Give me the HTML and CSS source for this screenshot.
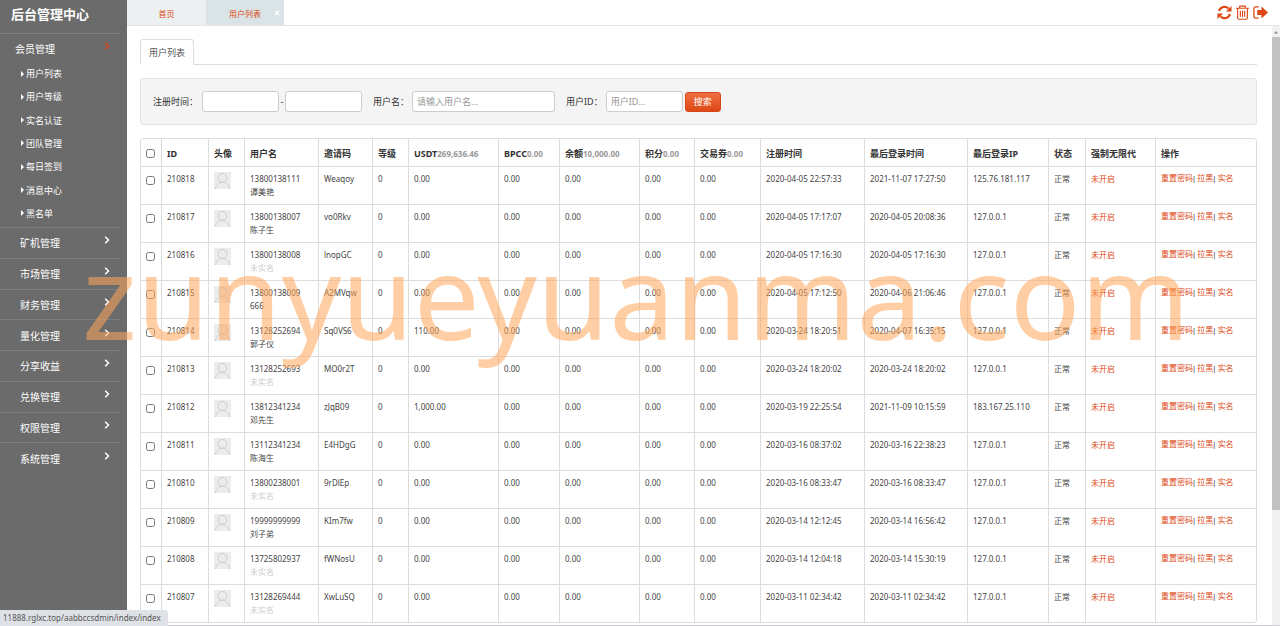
FILE: index.html
```html
<!DOCTYPE html>
<html lang="zh-CN">
<head>
<meta charset="utf-8">
<title>后台管理中心</title>
<link rel="stylesheet" href="styles.css">
</head>
<body>
<svg class="defs" width="0" height="0" aria-hidden="true">
<symbol id="avatar" viewBox="0 0 17 17"><rect width="17" height="17" fill="#ececec"/><circle cx="8.5" cy="5.8" r="4.4" fill="none" stroke="#cfcfcf"/><path d="M1.500 17c.4-4 3-6.600 7-6.600s6.600 2.600 7 6.600" fill="none" stroke="#cfcfcf"/></symbol>
<symbol id="chevron" viewBox="0 0 6 8"><path d="M1.200 .8 4.500 4 1.200 7.200" fill="none" stroke="currentColor" stroke-width="1.500"/></symbol>
</svg>
<div class="app">
<aside class="sidebar">
<h1 class="brand">后台管理中心</h1>
<nav>
<a class="group open" href="#"><span>会员管理</span><svg class="chevron"><use href="#chevron"/></svg></a>
<ul class="submenu">
<li><a href="#">用户列表</a></li>
<li><a href="#">用户等级</a></li>
<li><a href="#">实名认证</a></li>
<li><a href="#">团队管理</a></li>
<li><a href="#">每日签到</a></li>
<li><a href="#">消息中心</a></li>
<li><a href="#">黑名单</a></li>
</ul>
<div class="groups">
<a class="group" href="#"><span>矿机管理</span><svg class="chevron"><use href="#chevron"/></svg></a>
<a class="group" href="#"><span>市场管理</span><svg class="chevron"><use href="#chevron"/></svg></a>
<a class="group" href="#"><span>财务管理</span><svg class="chevron"><use href="#chevron"/></svg></a>
<a class="group" href="#"><span>量化管理</span><svg class="chevron"><use href="#chevron"/></svg></a>
<a class="group" href="#"><span>分享收益</span><svg class="chevron"><use href="#chevron"/></svg></a>
<a class="group" href="#"><span>兑换管理</span><svg class="chevron"><use href="#chevron"/></svg></a>
<a class="group" href="#"><span>权限管理</span><svg class="chevron"><use href="#chevron"/></svg></a>
<a class="group" href="#"><span>系统管理</span><svg class="chevron"><use href="#chevron"/></svg></a>
</div>
</nav>
</aside>
<div class="main">
<header class="topbar">
<a class="page-tab" href="#">首页</a>
<a class="page-tab active" href="#">用户列表<svg class="close" viewBox="0 0 6 6"><path d="M1 1l4 4M5 1 1 5" stroke="#fff" stroke-width="1.600"/></svg></a>
<div class="tools">
<button type="button" aria-label="刷新"><svg viewBox="0 0 16 16"><path d="M2.200 6.500A6 6 0 0 1 12.300 3.800M13.800 9.500A6 6 0 0 1 3.700 12.200" fill="none" stroke="currentColor" stroke-width="2.300"/><path d="M15.500 1v6h-6zM.5 15V9h6z" fill="currentColor"/></svg></button>
<button type="button" aria-label="清理"><svg viewBox="0 0 16 16"><path d="M1 3.500h14M5 3.500V1.200h6v2.300M2.800 3.500v10.200q0 1.500 1.500 1.500h7.400q1.500 0 1.500-1.500V3.500M5.700 6v6.500M8 6v6.500M10.300 6v6.500" fill="none" stroke="currentColor" stroke-width="1.200"/></svg></button>
<button type="button" aria-label="退出"><svg viewBox="0 0 16 16"><path d="M6 2H3Q1 2 1 4v8q0 2 2 2h3" fill="none" stroke="currentColor" stroke-width="1.400"/><path d="M4.500 5.300H9V1.500L16 8l-7 6.500v-3.800H4.500z" fill="currentColor"/></svg></button>
</div>
</header>
<div class="frame">
<main class="content">
<div class="tabs"><a class="tab" href="#">用户列表</a></div>
<form class="filters">
<label for="from">注册时间：</label><input id="from" type="text"><span class="dash">-</span><input type="text" aria-label="结束时间">
<label class="next" for="name">用户名：</label><input id="name" class="wide" type="text" placeholder="请输入用户名...">
<label class="next" for="uid">用户ID：</label><input id="uid" type="text" placeholder="用户ID...">
<button type="button">搜索</button>
</form>
<table class="users">
<colgroup><col class="c-check"><col class="c-id"><col class="c-avatar"><col class="c-name"><col class="c-code"><col class="c-level"><col class="c-usdt"><col class="c-bpcc"><col class="c-balance"><col class="c-points"><col class="c-coupon"><col class="c-time"><col class="c-login"><col class="c-ip"><col class="c-state"><col class="c-force"><col></colgroup>
<thead><tr><th><input type="checkbox" aria-label="全选"></th><th>ID</th><th>头像</th><th>用户名</th><th>邀请码</th><th>等级</th><th>USDT<small>269,636.46</small></th><th>BPCC<small>0.00</small></th><th>余额<small>10,000.00</small></th><th>积分<small>0.00</small></th><th>交易券<small>0.00</small></th><th>注册时间</th><th>最后登录时间</th><th>最后登录IP</th><th>状态</th><th>强制无限代</th><th>操作</th></tr></thead>
<tbody>
<tr><td><input type="checkbox" aria-label="210818"></td><td>210818</td><td><svg class="avatar"><use href="#avatar"/></svg></td><td>13800138111<br>谭美艳</td><td>Weaqoy</td><td>0</td><td>0.00</td><td>0.00</td><td>0.00</td><td>0.00</td><td>0.00</td><td>2020-04-05 22:57:33</td><td>2021-11-07 17:27:50</td><td>125.76.181.117</td><td>正常</td><td><a href="#">未开启</a></td><td><a href="#">重置密码</a>| <a href="#">拉黑</a>| <a href="#">实名</a></td></tr>
<tr><td><input type="checkbox" aria-label="210817"></td><td>210817</td><td><svg class="avatar"><use href="#avatar"/></svg></td><td>13800138007<br>陈子生</td><td>vo0Rkv</td><td>0</td><td>0.00</td><td>0.00</td><td>0.00</td><td>0.00</td><td>0.00</td><td>2020-04-05 17:17:07</td><td>2020-04-05 20:08:36</td><td>127.0.0.1</td><td>正常</td><td><a href="#">未开启</a></td><td><a href="#">重置密码</a>| <a href="#">拉黑</a>| <a href="#">实名</a></td></tr>
<tr><td><input type="checkbox" aria-label="210816"></td><td>210816</td><td><svg class="avatar"><use href="#avatar"/></svg></td><td>13800138008<br><span class="muted">未实名</span></td><td>lnopGC</td><td>0</td><td>0.00</td><td>0.00</td><td>0.00</td><td>0.00</td><td>0.00</td><td>2020-04-05 17:16:30</td><td>2020-04-05 17:16:30</td><td>127.0.0.1</td><td>正常</td><td><a href="#">未开启</a></td><td><a href="#">重置密码</a>| <a href="#">拉黑</a>| <a href="#">实名</a></td></tr>
<tr><td><input type="checkbox" aria-label="210815"></td><td>210815</td><td><svg class="avatar"><use href="#avatar"/></svg></td><td>13800138009<br>666</td><td>A2MVqw</td><td>0</td><td>0.00</td><td>0.00</td><td>0.00</td><td>0.00</td><td>0.00</td><td>2020-04-05 17:12:50</td><td>2020-04-06 21:06:46</td><td>127.0.0.1</td><td>正常</td><td><a href="#">未开启</a></td><td><a href="#">重置密码</a>| <a href="#">拉黑</a>| <a href="#">实名</a></td></tr>
<tr><td><input type="checkbox" aria-label="210814"></td><td>210814</td><td><svg class="avatar"><use href="#avatar"/></svg></td><td>13128252694<br>郭子仪</td><td>Sq0VS6</td><td>0</td><td>110.00</td><td>0.00</td><td>0.00</td><td>0.00</td><td>0.00</td><td>2020-03-24 18:20:51</td><td>2020-04-07 16:35:15</td><td>127.0.0.1</td><td>正常</td><td><a href="#">未开启</a></td><td><a href="#">重置密码</a>| <a href="#">拉黑</a>| <a href="#">实名</a></td></tr>
<tr><td><input type="checkbox" aria-label="210813"></td><td>210813</td><td><svg class="avatar"><use href="#avatar"/></svg></td><td>13128252693<br><span class="muted">未实名</span></td><td>MO0r2T</td><td>0</td><td>0.00</td><td>0.00</td><td>0.00</td><td>0.00</td><td>0.00</td><td>2020-03-24 18:20:02</td><td>2020-03-24 18:20:02</td><td>127.0.0.1</td><td>正常</td><td><a href="#">未开启</a></td><td><a href="#">重置密码</a>| <a href="#">拉黑</a>| <a href="#">实名</a></td></tr>
<tr><td><input type="checkbox" aria-label="210812"></td><td>210812</td><td><svg class="avatar"><use href="#avatar"/></svg></td><td>13812341234<br>邓先生</td><td>zJqB09</td><td>0</td><td>1,000.00</td><td>0.00</td><td>0.00</td><td>0.00</td><td>0.00</td><td>2020-03-19 22:25:54</td><td>2021-11-09 10:15:59</td><td>183.167.25.110</td><td>正常</td><td><a href="#">未开启</a></td><td><a href="#">重置密码</a>| <a href="#">拉黑</a>| <a href="#">实名</a></td></tr>
<tr><td><input type="checkbox" aria-label="210811"></td><td>210811</td><td><svg class="avatar"><use href="#avatar"/></svg></td><td>13112341234<br>陈海生</td><td>E4HDgG</td><td>0</td><td>0.00</td><td>0.00</td><td>0.00</td><td>0.00</td><td>0.00</td><td>2020-03-16 08:37:02</td><td>2020-03-16 22:38:23</td><td>127.0.0.1</td><td>正常</td><td><a href="#">未开启</a></td><td><a href="#">重置密码</a>| <a href="#">拉黑</a>| <a href="#">实名</a></td></tr>
<tr><td><input type="checkbox" aria-label="210810"></td><td>210810</td><td><svg class="avatar"><use href="#avatar"/></svg></td><td>13800238001<br><span class="muted">未实名</span></td><td>9rDlEp</td><td>0</td><td>0.00</td><td>0.00</td><td>0.00</td><td>0.00</td><td>0.00</td><td>2020-03-16 08:33:47</td><td>2020-03-16 08:33:47</td><td>127.0.0.1</td><td>正常</td><td><a href="#">未开启</a></td><td><a href="#">重置密码</a>| <a href="#">拉黑</a>| <a href="#">实名</a></td></tr>
<tr><td><input type="checkbox" aria-label="210809"></td><td>210809</td><td><svg class="avatar"><use href="#avatar"/></svg></td><td>19999999999<br>刘子弟</td><td>KIm7fw</td><td>0</td><td>0.00</td><td>0.00</td><td>0.00</td><td>0.00</td><td>0.00</td><td>2020-03-14 12:12:45</td><td>2020-03-14 16:56:42</td><td>127.0.0.1</td><td>正常</td><td><a href="#">未开启</a></td><td><a href="#">重置密码</a>| <a href="#">拉黑</a>| <a href="#">实名</a></td></tr>
<tr><td><input type="checkbox" aria-label="210808"></td><td>210808</td><td><svg class="avatar"><use href="#avatar"/></svg></td><td>13725802937<br><span class="muted">未实名</span></td><td>fWNosU</td><td>0</td><td>0.00</td><td>0.00</td><td>0.00</td><td>0.00</td><td>0.00</td><td>2020-03-14 12:04:18</td><td>2020-03-14 15:30:19</td><td>127.0.0.1</td><td>正常</td><td><a href="#">未开启</a></td><td><a href="#">重置密码</a>| <a href="#">拉黑</a>| <a href="#">实名</a></td></tr>
<tr><td><input type="checkbox" aria-label="210807"></td><td>210807</td><td><svg class="avatar"><use href="#avatar"/></svg></td><td>13128269444<br><span class="muted">未实名</span></td><td>XwLuSQ</td><td>0</td><td>0.00</td><td>0.00</td><td>0.00</td><td>0.00</td><td>0.00</td><td>2020-03-11 02:34:42</td><td>2020-03-11 02:34:42</td><td>127.0.0.1</td><td>正常</td><td><a href="#">未开启</a></td><td><a href="#">重置密码</a>| <a href="#">拉黑</a>| <a href="#">实名</a></td></tr>
</tbody>
</table>
</main>
<div class="scrollbar"><svg viewBox="0 0 8 11"><path d="M2 7.500h4L4 5z" fill="#8a8a8a"/></svg><div class="thumb"></div></div>
</div>
</div>
</div>
<div class="watermark">zunyueyuanma.com</div>
<div class="status">11888.rglxc.top/aabbccsdmin/index/index</div>
</body>
</html>
```
FILE: styles.css
```css
* { box-sizing: border-box; }
body {
  margin: 0;
  height: 100vh;
  overflow: hidden;
  background: #fff;
  color: #444;
  font: 9px/13px "Noto Sans", "Noto Sans CJK SC", sans-serif;
}
a { color: #dd4814; text-decoration: none; }
.defs { position: absolute; }
.app { display: flex; height: 100vh; border-bottom: 1px solid #cdced4; }

.sidebar { flex: none; width: 127px; padding-right: 7px; background: #6b6b6b; color: #fff; }
.sidebar a { color: #fff; }
.brand {
  margin: 0;
  height: 34px;
  padding: 4px 11px;
  border-bottom: 1px solid #7d7d7d;
  font-size: 13px;
  line-height: 20px;
  white-space: nowrap;
}
.group {
  display: flex;
  align-items: center;
  justify-content: space-between;
  padding: 2px 10px 0 20px;
  font-size: 10px;
}
.group.open { height: 28px; padding-left: 15px; }
.groups { display: grid; grid-auto-rows: 1fr; height: 246px; }
.groups .group { border-top: 1px solid #7d7d7d; }
.chevron { width: 6px; height: 8px; margin-bottom: 7px; }
.open .chevron { color: #dd4814; }
.submenu {
  display: grid;
  grid-auto-rows: 1fr;
  height: 165px;
  margin: 0;
  padding: 0 0 2px 21px;
  list-style: none;
}
.submenu a { display: flex; align-items: center; gap: 2px; height: 100%; }
.submenu a::before {
  content: "";
  border: 3px solid transparent;
  border-left-color: #fff;
  border-right-width: 0;
}

.main { flex: 1; min-width: 0; display: flex; flex-direction: column; }
.topbar { flex: none; display: flex; height: 26px; border-bottom: 1px solid #e4e6e7; }
.page-tab {
  position: relative;
  display: flex;
  align-items: center;
  justify-content: center;
  width: 79px;
  padding-top: 2px;
  background: #ecf0f1;
  font-size: 8px;
}
.page-tab.active { width: 78px; background: #dae4e6; }
.close { position: absolute; right: 4px; top: 10px; width: 6px; height: 6px; }
.tools { display: flex; gap: 3px; align-items: center; margin-left: auto; padding-right: 12px; }
.tools button { width: 15px; height: 17px; padding: 0; border: 0; background: none; color: #dd4814; }
.tools svg { display: block; width: 15px; height: 15px; }

.frame { flex: 1; min-height: 0; display: flex; }
.content { flex: 1; min-width: 0; padding: 13px 15px 0 13px; overflow: hidden; }
.scrollbar { flex: none; width: 8px; background: #f1f1f1; }
.scrollbar svg { display: block; width: 8px; height: 11px; }
.thumb { height: 79%; background: #c1c1c1; }

.tabs { display: flex; border-bottom: 1px solid #ddd; }
.tab {
  margin-bottom: -1px;
  padding: 6px 8px 5px;
  border: 1px solid #ddd;
  border-bottom-color: #fff;
  border-radius: 3px 3px 0 0;
  background: #fff;
  color: #555;
}
.filters {
  display: flex;
  align-items: center;
  margin: 13px 0;
  padding: 12px;
  border: 1px solid #e3e3e3;
  border-radius: 3px;
  background: #f4f4f4;
  color: #333;
}
.filters input {
  width: 77px;
  height: 21px;
  padding: 0 4px;
  border: 1px solid #ccc;
  border-radius: 3px;
  background: #fff;
  font: inherit;
}
.filters input::placeholder { color: #999; }
.filters .wide { width: 143px; }
.filters label { padding-right: 4px; }
.filters .next { padding: 0 3px 0 11px; }
.dash { width: 6px; text-align: center; }
.filters button {
  width: 36px;
  height: 20px;
  margin-left: 2px;
  padding: 0;
  border: 1px solid #d5481a;
  border-radius: 3px;
  background: linear-gradient(#ee6f42, #dd4814);
  color: #fff;
  font: inherit;
}

.users {
  width: 100%;
  table-layout: fixed;
  border: 1px solid #ddd;
  border-radius: 3px;
  border-collapse: separate;
  border-spacing: 0;
}
.users th, .users td { text-align: left; vertical-align: top; white-space: nowrap; }
.users th { padding: 8px 5px 6px; color: #333; font-weight: 700; }
.users small { color: #999; font-size: 8px; }
.users td { padding: 5px 5px 6px; border-top: 1px solid #ddd; font-size: 8px; }
.users th + th, .users td + td { border-left: 1px solid #ddd; }
.users td:last-child { font-family: "Liberation Sans", "Noto Sans CJK SC", sans-serif; }
.users input { display: block; width: 9px; height: 9px; margin: 2px 0; }
.users td input { margin: 4px 0 0; }
.avatar { display: block; width: 17px; height: 17px; }
.muted { color: #ccc; }
.c-check { width: 20px; }
.c-id { width: 47px; }
.c-avatar, .c-level { width: 36px; }
.c-name { width: 74px; }
.c-code { width: 54px; }
.c-usdt { width: 90px; }
.c-bpcc { width: 61px; }
.c-balance { width: 80px; }
.c-points { width: 55px; }
.c-coupon { width: 66px; }
.c-time { width: 104px; }
.c-login { width: 103px; }
.c-ip { width: 81px; }
.c-state { width: 37px; }
.c-force { width: 70px; }

.watermark {
  position: absolute;
  left: 50%;
  top: 294px;
  transform: translateX(-50%);
  margin-left: -4px;
  color: rgba(255, 165, 89, .55);
  font-size: 117px;
  line-height: 1;
  height: 0;
  display: flex;
  align-items: center;
  pointer-events: none;
}
.status {
  position: absolute;
  left: 0;
  bottom: 0;
  padding: 1px 7px 2px 3px;
  border-top-right-radius: 3px;
  background: #dee1e6;
  color: #555;
  font-size: 8px;
}
```
